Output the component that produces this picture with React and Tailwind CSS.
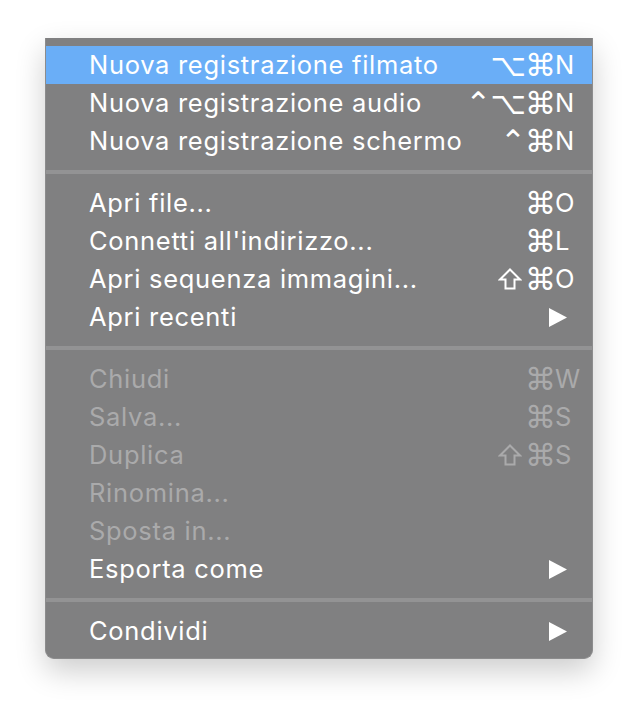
import React from 'react';

const sections = [
  [
    { label: 'Nuova registrazione filmato', mods: '⌥⌘', key: 'N', active: true },
    { label: 'Nuova registrazione audio', mods: '⌃⌥⌘', key: 'N' },
    { label: 'Nuova registrazione schermo', mods: '⌃⌘', key: 'N' },
  ],
  [
    { label: 'Apri file...', mods: '⌘', key: 'O' },
    { label: "Connetti all'indirizzo...", mods: '⌘', key: 'L' },
    { label: 'Apri sequenza immagini...', shift: true, mods: '⌘', key: 'O' },
    { label: 'Apri recenti', submenu: true },
  ],
  [
    { label: 'Chiudi', mods: '⌘', key: 'W', disabled: true },
    { label: 'Salva...', mods: '⌘', key: 'S', disabled: true },
    { label: 'Duplica', shift: true, mods: '⌘', key: 'S', disabled: true },
    { label: 'Rinomina...', disabled: true },
    { label: 'Sposta in...', disabled: true },
    { label: 'Esporta come', submenu: true },
  ],
  [{ label: 'Condividi', submenu: true }],
];

// outline shift arrow, DejaVu's one is too narrow
const ShiftIcon = () => (
  <svg width="24" height="22" viewBox="0 0 24 22" className="mr-[3px]">
    <path d="M12 1.5 L22 11.5 L16.5 11.5 L16.5 20.5 L7.5 20.5 L7.5 11.5 L2 11.5 Z" fill="none" stroke="currentColor" strokeWidth="2" strokeLinejoin="miter" />
  </svg>
);

const MenuRow = ({ item }) => {
  const color = item.disabled ? 'text-[#aaaaab]' : 'text-white';
  return (
    <div
      className={`flex items-center h-[38px] pl-[43px] ${color} ${item.active ? 'bg-[#6aaef7]' : ''}`}
    >
      <span className="text-[25.5px] leading-none tracking-[0.7px]">{item.label}</span>
      {item.submenu && (
        <div className="ml-auto pr-[25px] flex">
          <svg width="18" height="19" viewBox="0 0 18 19">
            <polygon points="0,0 18,9.5 0,19" fill="white" />
          </svg>
        </div>
      )}
      {item.mods && (
        <div className="ml-auto flex items-center">
          {item.shift && <ShiftIcon />}
          <span className="font-['DejaVu_Sans',sans-serif] text-[31px] leading-none tracking-[-1px]">
            {item.mods}
          </span>
          <span className="w-[37px] text-[25.5px] leading-none">{item.key}</span>
        </div>
      )}
    </div>
  );
};

const App = () => {
  return (
    <div className="min-h-screen bg-white pt-[38px] pl-[45px] font-['Inter',sans-serif]">
      <div className="w-[548px] bg-[#808081] border-x border-b border-[#8c8c8d] rounded-b-[9px] py-[8px] shadow-[0_12px_30px_rgba(0,0,0,0.2)]">
        {sections.map((items, i) => (
          <div key={i}>
            {i > 0 && (
              <div className="h-[24px] flex items-center">
                <div className="h-[4px] w-full bg-[#939394]" />
              </div>
            )}
            {items.map((item) => (
              <MenuRow key={item.label} item={item} />
            ))}
          </div>
        ))}
      </div>
    </div>
  );
};

export default App;
